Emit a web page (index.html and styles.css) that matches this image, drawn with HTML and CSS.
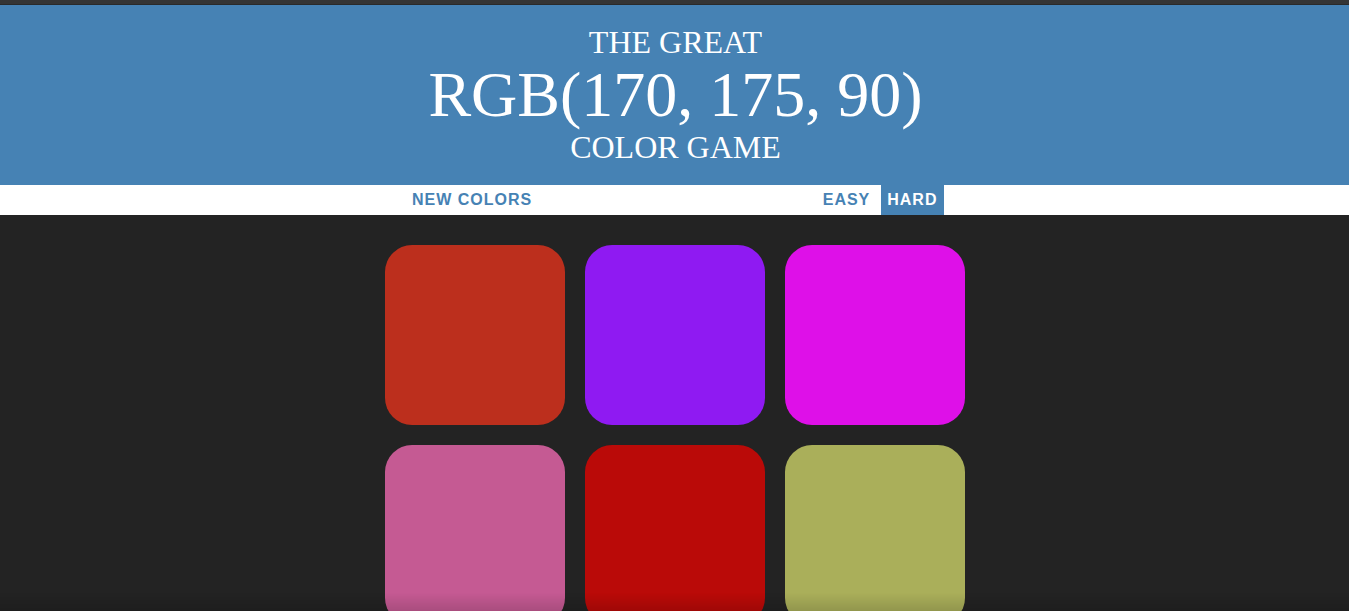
FILE: index.html
```html
<!DOCTYPE html>
<html lang="en">
<head>
<meta charset="utf-8">
<title>Color Game</title>
<link rel="stylesheet" href="styles.css">
</head>
<body>
<div class="topbar"></div>
<h1 class="title">
  <span class="line">The Great</span>
  <span class="line color-display">RGB(170, 175, 90)</span>
  <span class="line">Color Game</span>
</h1>
<div class="stripe">
  <button class="btn">New Colors</button>
  <span class="message"></span>
  <button class="btn">Easy</button>
  <button class="btn selected">Hard</button>
</div>
<div class="container">
  <div class="square sq1"></div>
  <div class="square sq2"></div>
  <div class="square sq3"></div>
  <div class="square sq4"></div>
  <div class="square sq5"></div>
  <div class="square sq6"></div>
</div>
<div class="bottom-fade"></div>
</body>
</html>
```
FILE: styles.css
```css
html, body {
  margin: 0;
  padding: 0;
}
body {
  background: #232323;
  font-family: "Liberation Sans", Arial, sans-serif;
  overflow: hidden;
}
.topbar {
  height: 4px;
  background: #353535;
  border-bottom: 1px solid #2a2a2a;
}
.title {
  margin: 0;
  padding: 20px 0 20px 2px;
  background: #4682b4;
  color: #fff;
  text-align: center;
  text-transform: uppercase;
  font-family: "Liberation Serif", "Times New Roman", serif;
  font-weight: normal;
  font-size: 32px;
}
.line {
  display: block;
  height: 35px;
  line-height: 35px;
}
.color-display {
  font-size: 64px;
  height: 70px;
  line-height: 70px;
}
.stripe {
  height: 30px;
  background: #fff;
  display: flex;
  justify-content: center;
  align-items: stretch;
  gap: 4.45px;
  padding-left: 1px;
  font-size: 16px;
}
.message {
  width: 20%;
  flex: none;
}
.btn {
  border: none;
  background: none;
  margin: 0;
  padding: 1px 6px;
  font-family: "Liberation Sans", Arial, sans-serif;
  font-size: 16px;
  font-weight: 700;
  letter-spacing: 1px;
  text-transform: uppercase;
  color: #4682b4;
  outline: none;
  cursor: pointer;
}
.btn.selected {
  background: #4682b4;
  color: #fff;
  padding: 1px 6.5px;
}
.container {
  width: 600px;
  margin: 20px auto 0;
  display: flex;
  flex-wrap: wrap;
}
.square {
  width: 180px;
  height: 180px;
  margin: 10px;
  border-radius: 15%;
}
.sq1 { background: rgb(188, 47, 29); }
.sq2 { background: rgb(143, 26, 242); }
.sq3 { background: rgb(222, 16, 232); }
.sq4 { background: rgb(197, 90, 147); }
.sq5 { background: rgb(186, 10, 8); }
.sq6 { background: rgb(170, 175, 90); }
.bottom-fade {
  position: fixed;
  left: 0;
  right: 0;
  bottom: 0;
  height: 18px;
  background: linear-gradient(to bottom, rgba(0,0,0,0), rgba(0,0,0,0.14));
  pointer-events: none;
}
```
